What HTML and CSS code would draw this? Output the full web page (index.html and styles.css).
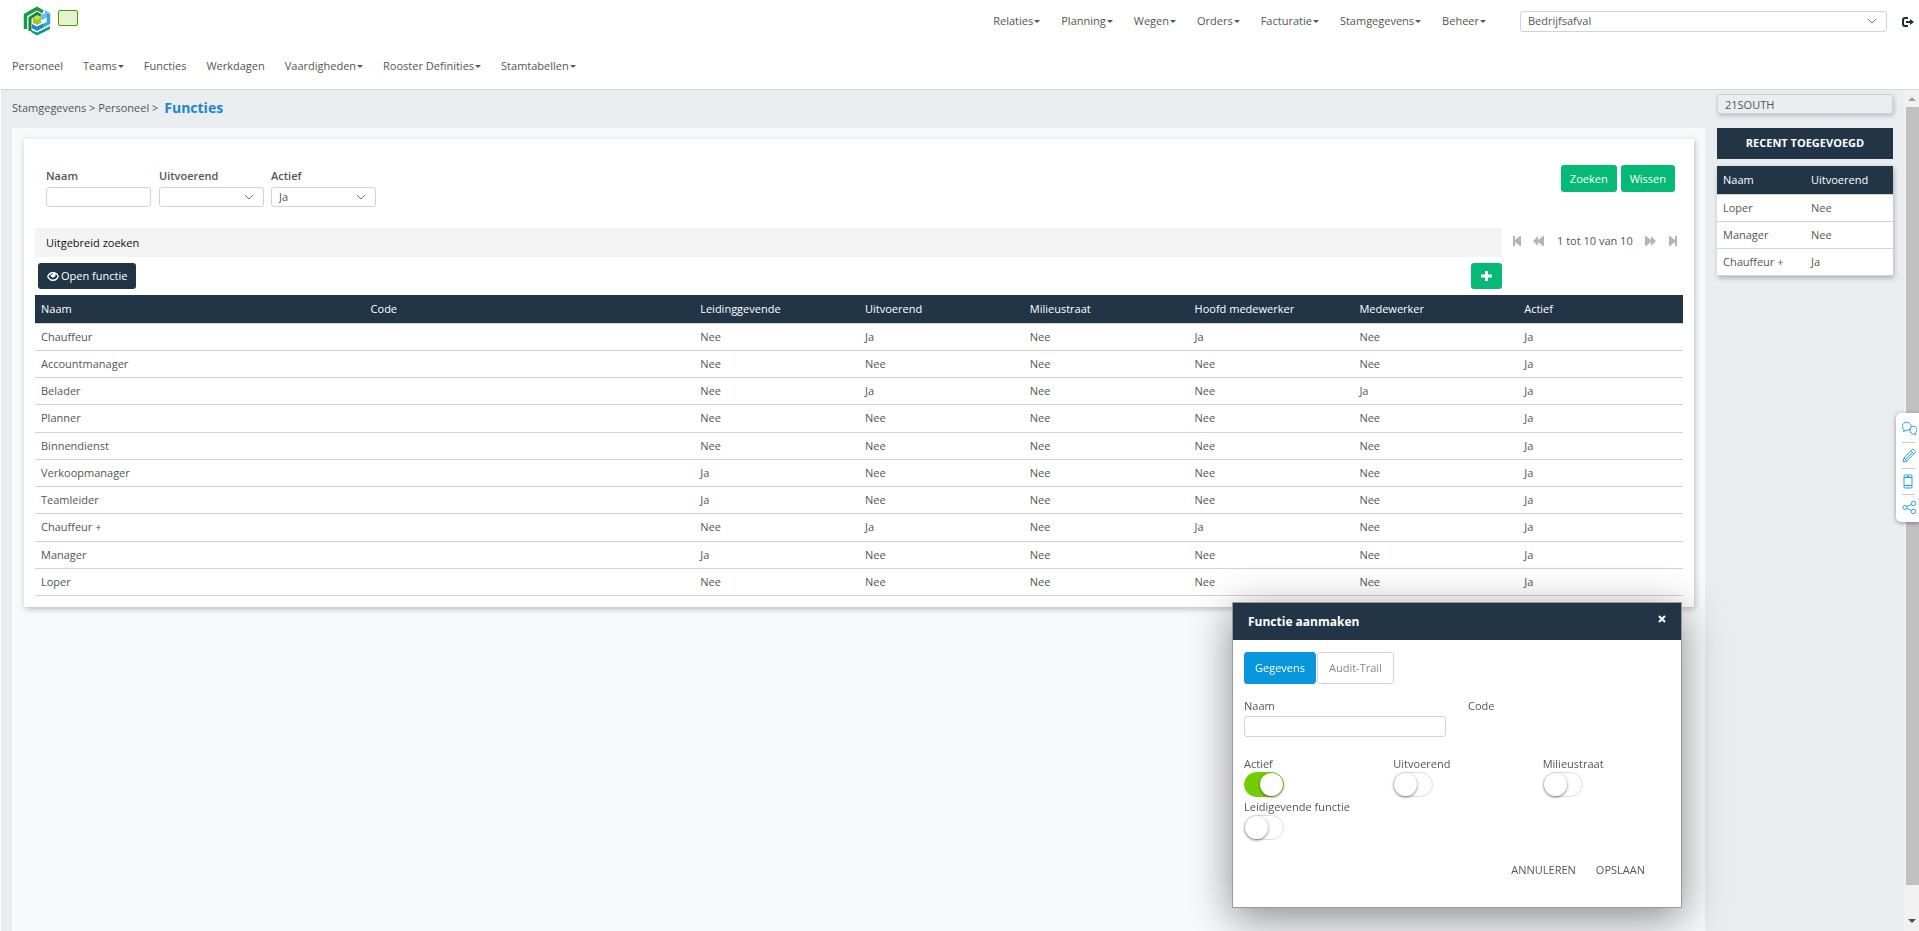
FILE: index.html
```html
<!DOCTYPE html>
<html lang="nl">
<head>
<meta charset="utf-8">
<title>Functies</title>
<link rel="stylesheet" href="styles.css">
</head>
<body>
<div class="app">
  <header class="header">
    <div class="topbar">
      <a class="logo" href="#" aria-label="Home">
        <svg width="28" height="30" viewBox="0 0 28 30">
          <path d="M2.500 23V9L14 2.500 20 6" fill="none" stroke="#1d9a48" stroke-width="3.500"/>
          <path d="M7 25V12l7-4.500 4 2" fill="none" stroke="#128a35" stroke-width="3"/>
          <path d="m22 4 5 3v3l-8 4-4-3 7-4z" fill="#6bbdf0"/>
          <path d="M25.500 8v9L14 23l-5-2.500" fill="none" stroke="#36a5de" stroke-width="3.500"/>
          <path d="m9 18 5 2.500 6-3v4l-6 3-5-3z" fill="#1e86cc"/>
          <path d="m8 24 6 2.500L27 20v3l-13 6.500L8 26z" fill="#0a9a86"/>
          <path d="m10 12 4-2 4 2v5l-4 2-4-2z" fill="#a5c81a"/>
          <path d="m10 12 4-2 4 2-4 2z" fill="#d5dc28"/>
        </svg>
      </a>
      <span class="status"></span>
      <nav class="menu menu-main" aria-label="Hoofdmenu">
        <a href="#">Relaties<i class="caret"></i></a>
        <a href="#">Planning<i class="caret"></i></a>
        <a href="#">Wegen<i class="caret"></i></a>
        <a href="#">Orders<i class="caret"></i></a>
        <a href="#">Facturatie<i class="caret"></i></a>
        <a href="#">Stamgegevens<i class="caret"></i></a>
        <a href="#">Beheer<i class="caret"></i></a>
      </nav>
      <div class="select-wrap select-company">
        <select class="field" aria-label="Bedrijf"><option>Bedrijfsafval</option></select>
        <svg class="chevron" width="10" height="6" viewBox="0 0 10 6"><path d="m1 1 4 4 4-4"/></svg>
      </div>
      <a class="logout" href="#" aria-label="Uitloggen">
        <svg width="12" height="10" viewBox="0 0 12 10"><path d="M6 1H3a2 2 0 0 0-2 2v4a2 2 0 0 0 2 2h3" fill="none" stroke="#1b2f3f" stroke-width="2"/><path d="M4 4h4V2l4 3-4 3V6H4z" fill="#1b2f3f"/></svg>
      </a>
    </div>
    <nav class="menu menu-sub" aria-label="Submenu">
      <a href="#">Personeel</a>
      <a href="#">Teams<i class="caret"></i></a>
      <a href="#">Functies</a>
      <a href="#">Werkdagen</a>
      <a href="#">Vaardigheden<i class="caret"></i></a>
      <a href="#">Rooster Definities<i class="caret"></i></a>
      <a href="#">Stamtabellen<i class="caret"></i></a>
    </nav>
  </header>

  <div class="body">
    <main class="main">
      <div class="crumbs">Stamgegevens &gt; Personeel &gt; <h1>Functies</h1></div>
      <div class="panel">
        <section class="card">
          <form class="filters">
            <label class="filter">Naam<input class="field" type="text"></label>
            <label class="filter">Uitvoerend
              <span class="select-wrap"><select class="field"><option></option></select><svg class="chevron" width="10" height="6" viewBox="0 0 10 6"><path d="m1 1 4 4 4-4"/></svg></span>
            </label>
            <label class="filter">Actief
              <span class="select-wrap"><select class="field"><option>Ja</option></select><svg class="chevron" width="10" height="6" viewBox="0 0 10 6"><path d="m1 1 4 4 4-4"/></svg></span>
            </label>
            <div class="filter-actions">
              <button class="btn btn-green" type="button">Zoeken</button>
              <button class="btn btn-green" type="button">Wissen</button>
            </div>
          </form>
          <div class="toolbar">
            <div class="tools">
              <button class="extended" type="button">Uitgebreid zoeken</button>
              <div class="tool-row">
                <button class="btn btn-dark" type="button"><svg width="12" height="9" viewBox="0 0 12 9"><path d="M6 0C3 0 1 2 0 4.500 1 7 3 9 6 9s5-2 6-4.500C11 2 9 0 6 0z" fill="#fff"/><path d="M1.500 4.500C3 8.500 9 8.500 10.500 4.500 10 3.500 9.500 2.500 8.500 2 9.500 6.500 2.500 6.500 3.500 2 2.500 2.500 2 3.500 1.500 4.500z" fill="#213547"/><path d="M4.500 3c0-1 .500-1.500 1.500-1.500" fill="none" stroke="#213547"/></svg>Open functie</button>
                <button class="btn btn-green btn-add" type="button" aria-label="Toevoegen"><svg width="11" height="10" viewBox="0 0 11 10"><path d="M5.500 0v10M0 5h11" stroke="#fff" stroke-width="3"/></svg></button>
              </div>
            </div>
            <div class="pager">
              <button type="button" aria-label="Eerste"><svg width="8" height="10" viewBox="0 0 8 10"><path d="M0 0h2v4l5-4h1v10H7L2 6v4H0z"/></svg></button>
              <button type="button" aria-label="Vorige"><svg width="11" height="10" viewBox="0 0 11 10"><path d="m0 5 5-5v4l5-4h1v10h-1L5 6v4z"/></svg></button>
              <span>1 tot 10 van 10</span>
              <button type="button" aria-label="Volgende"><svg width="11" height="10" viewBox="0 0 11 10"><path d="m11 5-5-5v4L1 0H0v10h1l5-4v4z"/></svg></button>
              <button type="button" aria-label="Laatste"><svg width="8" height="10" viewBox="0 0 8 10"><path d="M8 0H6v4L1 0H0v10h1l5-4v4h2z"/></svg></button>
            </div>
          </div>
          <table class="grid grid-main">
            <thead><tr><th class="wide">Naam</th><th class="wide">Code</th><th>Leidinggevende</th><th>Uitvoerend</th><th>Milieustraat</th><th>Hoofd medewerker</th><th>Medewerker</th><th>Actief</th></tr></thead>
            <tbody>
              <tr><td>Chauffeur</td><td></td><td>Nee</td><td>Ja</td><td>Nee</td><td>Ja</td><td>Nee</td><td>Ja</td></tr>
              <tr><td>Accountmanager</td><td></td><td>Nee</td><td>Nee</td><td>Nee</td><td>Nee</td><td>Nee</td><td>Ja</td></tr>
              <tr><td>Belader</td><td></td><td>Nee</td><td>Ja</td><td>Nee</td><td>Nee</td><td>Ja</td><td>Ja</td></tr>
              <tr><td>Planner</td><td></td><td>Nee</td><td>Nee</td><td>Nee</td><td>Nee</td><td>Nee</td><td>Ja</td></tr>
              <tr><td>Binnendienst</td><td></td><td>Nee</td><td>Nee</td><td>Nee</td><td>Nee</td><td>Nee</td><td>Ja</td></tr>
              <tr><td>Verkoopmanager</td><td></td><td>Ja</td><td>Nee</td><td>Nee</td><td>Nee</td><td>Nee</td><td>Ja</td></tr>
              <tr><td>Teamleider</td><td></td><td>Ja</td><td>Nee</td><td>Nee</td><td>Nee</td><td>Nee</td><td>Ja</td></tr>
              <tr><td>Chauffeur +</td><td></td><td>Nee</td><td>Ja</td><td>Nee</td><td>Ja</td><td>Nee</td><td>Ja</td></tr>
              <tr><td>Manager</td><td></td><td>Ja</td><td>Nee</td><td>Nee</td><td>Nee</td><td>Nee</td><td>Ja</td></tr>
              <tr><td>Loper</td><td></td><td>Nee</td><td>Nee</td><td>Nee</td><td>Nee</td><td>Nee</td><td>Ja</td></tr>
            </tbody>
          </table>
        </section>
      </div>
    </main>

    <aside class="side">
      <input class="field tenant" type="text" value="21SOUTH" aria-label="Klant" readonly>
      <h2 class="side-title">RECENT TOEGEVOEGD</h2>
      <table class="grid grid-side">
        <thead><tr><th>Naam</th><th>Uitvoerend</th></tr></thead>
        <tbody>
          <tr><td>Loper</td><td>Nee</td></tr>
          <tr><td>Manager</td><td>Nee</td></tr>
          <tr><td>Chauffeur +</td><td>Ja</td></tr>
        </tbody>
      </table>
    </aside>

    <div class="scrollbar" aria-hidden="true">
      <svg width="15" height="17" viewBox="0 0 15 17"><path d="m4 11 4-4 4 4z" fill="#a3a3a3"/></svg>
      <div class="thumb"></div>
      <svg width="15" height="17" viewBox="0 0 15 17"><path d="m4 5 4 4 4-4z" fill="#505050"/></svg>
    </div>
  </div>

  <div class="dock">
    <a href="#" aria-label="Chat"><svg viewBox="0 0 15 15"><path d="M2 8.500A4.500 4 0 1 1 6.500 9L4 9.500 1.500 10.500z"/><path d="M8 8a3.500 3.500 0 1 1 5.500 3.500l.5 2-2-.5A3.500 3.500 0 0 1 8 9z" fill="#fff"/></svg></a>
    <a href="#" aria-label="Bewerken"><svg viewBox="0 0 15 15"><path d="m1 14 1-4 8-8.500c1-1 4 1.500 3 3L5 13z M2 10l3 3 M9 3l3 3 M4 11l7-7"/></svg></a>
    <a href="#" aria-label="Telefoon"><svg viewBox="0 0 15 15"><path d="M3 1h6a1 1 0 0 1 1 1v11a1 1 0 0 1-1 1H3a1 1 0 0 1-1-1V2a1 1 0 0 1 1-1zM2 3.500h8M2 11.500h8M5 2.500h2M5.500 13h1"/></svg></a>
    <a href="#" aria-label="Delen"><svg viewBox="0 0 15 15"><circle cx="3" cy="7.500" r="2"/><circle cx="11.500" cy="3.500" r="2.200"/><circle cx="11.500" cy="11.500" r="2.200"/><path d="m5 6.500 4.500-2M5 8.500l4.500 2"/></svg></a>
  </div>

  <div class="dialog" role="dialog" aria-labelledby="dialog-title">
    <div class="dialog-head">
      <h2 id="dialog-title">Functie aanmaken</h2>
      <button class="close" type="button" aria-label="Sluiten"><svg width="8" height="8" viewBox="0 0 8 8"><path d="m1 1 6 6M7 1 1 7" stroke="#fff" stroke-width="2"/></svg></button>
    </div>
    <div class="dialog-body">
      <div class="tabs" role="tablist">
        <button class="tab tab-active" type="button" role="tab" aria-selected="true">Gegevens</button>
        <button class="tab" type="button" role="tab" aria-selected="false">Audit-Trail</button>
      </div>
      <div class="row-fields">
        <label>Naam<input class="field" type="text"></label>
        <span>Code</span>
      </div>
      <div class="row-toggles">
        <label>Actief<input class="toggle" type="checkbox" checked></label>
        <label>Uitvoerend<input class="toggle" type="checkbox"></label>
        <label>Milieustraat<input class="toggle" type="checkbox"></label>
        <label>Leidigevende functie<input class="toggle" type="checkbox"></label>
      </div>
      <div class="dialog-actions">
        <button type="button">ANNULEREN</button>
        <button type="button">OPSLAAN</button>
      </div>
    </div>
  </div>
</div>
</body>
</html>
```
FILE: styles.css
```css
* { box-sizing: border-box; }

body {
  margin: 0;
  background: #fff;
  color: #555;
  font: 11px/16px "Open Sans", "Noto Sans", sans-serif;
}

a { color: inherit; text-decoration: none; }
button { font: inherit; color: inherit; border: 0; background: none; padding: 0; cursor: pointer; }
h1, h2 { margin: 0; }

.app { display: flex; flex-direction: column; height: 100vh; padding-left: 1px; overflow: hidden; }

.header { flex: none; height: 90px; border-bottom: 1px solid #d3d5d6; }
.topbar { display: flex; align-items: center; height: 42px; padding: 0 5px 0 22px; }
.logo { height: 30px; margin-right: 7px; }
.status { width: 20px; height: 16px; margin-bottom: 6px; border: 1px solid #4e9a06; border-radius: 2px; background: #e4f3cd; }
.menu { display: flex; }
.menu a { display: flex; align-items: center; }
.menu-main { gap: 21px; margin-left: auto; margin-right: 34px; }
.menu-sub { gap: 20px; padding: 16px 11px; }
.caret { margin-left: 1px; border: 3px solid transparent; border-top-color: #555; border-bottom: 0; }

.field {
  display: block; width: 100%; height: 20px; margin: 0; padding: 0 7px;
  border: 1px solid #d3d3d3; border-radius: 3px; background: #fff;
  color: #555; font: inherit; font-weight: 400; appearance: none; outline: 0;
}
.select-wrap { display: block; position: relative; }
.chevron { position: absolute; top: 7px; right: 10px; fill: none; stroke: #777; pointer-events: none; }
.select-company { width: 367px; }
.select-company .field { height: 21px; }
.logout { height: 12px; margin-left: 15px; }

.body { flex: 1; display: flex; min-height: 0; background: #e9edf0; }
.main { flex: 1; display: flex; flex-direction: column; padding-left: 11px; }
.crumbs { display: flex; align-items: center; gap: 3px; height: 38px; padding-bottom: 2px; white-space: pre; }
.crumbs h1 { font-size: 14px; line-height: 18px; font-weight: 700; color: #1a86cf; }
.panel { flex: 1; padding: 11px 11px 0 12px; background: #f8f9fb; }
.card { padding: 26px 11px 11px; background: #fff; box-shadow: 1px 2px 6px rgba(0, 0, 0, .25); }

.filters { display: flex; gap: 7px; padding: 0 8px 0 11px; }
.filter { width: 105px; padding-top: 3px; font-weight: 600; }
.filter:nth-child(2) { margin-left: 1px; }
.filter .field { margin-top: 3px; }
.filter-actions { display: flex; gap: 4px; margin-left: auto; }
.btn { display: flex; align-items: center; justify-content: center; gap: 2px; height: 26px; padding: 0 10px; border-radius: 3px; color: #fff; }
.btn-green { background: #05b977; }
.filter-actions .btn { height: 27px; padding: 0 9px; }
.btn-dark { padding: 0 9px; background: #213547; }

.toolbar { display: flex; margin-top: 21px; }
.tools { width: 89%; }
.extended { display: block; width: 100%; height: 29px; padding: 0 11px; background: #f4f4f4; color: #111; text-align: left; }
.tool-row { display: flex; justify-content: space-between; padding: 6px 0 6px 3px; }
.pager { flex: 1; display: flex; align-items: center; justify-content: space-between; height: 26px; padding: 0 6px 0 11px; }
.pager button { display: flex; fill: #b4b4b4; }

.grid { width: 100%; border-collapse: collapse; table-layout: fixed; }
.grid th, .grid td { padding: 0 6px; text-align: left; font-weight: 400; border-bottom: 1px solid #d3d3d3; }
.grid th { height: 28px; background: #213547; color: #fff; }
.grid td { height: 27px; background: #fff; }
.grid-main { height: 301px; }
.grid-main .wide { width: 20%; }

.side { flex: none; width: 199px; padding: 4px 11px 0 12px; }
.tenant { background: #e9edf0; box-shadow: 1px 2px 4px rgba(0, 0, 0, .2); }
.side-title { margin: 14px 0 7px; padding: 7px 0 8px; background: #213547; color: #fff; font-size: 11px; font-weight: 700; text-align: center; }
.grid-side { box-shadow: 1px 2px 5px rgba(0, 0, 0, .25); }

.scrollbar { flex: none; display: flex; flex-direction: column; width: 15px; background: #f1f1f1; }
.scrollbar .thumb { width: 13px; height: 778px; margin-left: auto; margin-bottom: auto; background: #c1c1c1; }

.dock { position: fixed; top: 413px; right: 0; width: 23px; padding: 3px 0 2px 6px; border-radius: 5px 0 0 5px; background: #fff; box-shadow: 0 1px 4px rgba(0, 0, 0, .4); }
.dock a { display: block; height: 26px; padding-top: 5px; }
.dock a + a { border-top: 1px solid #ccc; margin-right: 4px; }
.dock svg { display: block; width: 15px; height: 15px; fill: none; stroke: #2a9fd8; }

.dialog { position: fixed; right: 237px; bottom: 23px; width: 450px; border: 1px solid #999; background: #fff; box-shadow: 0 10px 40px rgba(0, 0, 0, .45); }
.dialog-head { display: flex; justify-content: space-between; height: 37px; padding: 11px 15px 0; background: #213547; color: #fff; }
.dialog-head h2 { font-size: 12px; line-height: 16px; font-weight: 700; }
.close { display: flex; height: 10px; padding-top: 1px; }
.dialog-body { padding: 12px 11px 29px; }
.tabs { display: flex; gap: 1px; }
.tab { height: 32px; padding: 0 11px; border: 1px solid #d3d3d3; border-radius: 3px; color: #888; }
.tab-active { padding: 0 10px; border-color: #0896dc; background: #0896dc; color: #fff; }
.row-fields { display: grid; grid-template-columns: 202px 1fr; column-gap: 22px; margin-top: 14px; }
.row-fields .field { margin-top: 2px; height: 21px; }
.row-toggles { display: grid; grid-template-columns: repeat(3, 1fr); row-gap: 2px; margin-top: 19px; margin-right: -22px; }
.toggle { display: block; appearance: none; width: 40px; height: 25px; margin: 0; padding: 0; border: 1px solid #ddd; border-radius: 13px; background: #fff; }
.toggle::before { content: ""; display: block; width: 23px; height: 23px; border-radius: 50%; background: #fff; box-shadow: 0 1px 3px rgba(0, 0, 0, .5); }
.toggle:checked { border-color: #76cc02; background: #76cc02; }
.toggle:checked::before { margin-left: auto; }
.dialog-actions { display: flex; justify-content: flex-end; gap: 20px; margin-top: 22px; padding-right: 25px; }
```
